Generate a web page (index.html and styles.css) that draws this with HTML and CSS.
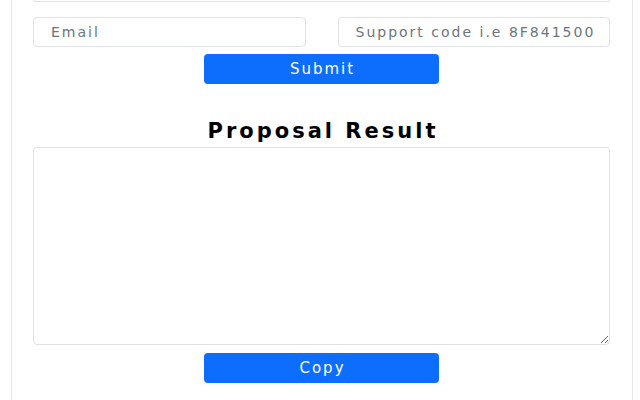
FILE: index.html
```html
<!DOCTYPE html>
<html lang="en">
<head>
<meta charset="utf-8">
<title>Proposal</title>
<link rel="stylesheet" href="styles.css">
</head>
<body>
<div class="panel">
  <div class="prev-field"></div>
  <div class="row">
    <input class="field" type="text" placeholder="Email">
    <input class="field" type="text" placeholder="Support code i.e 8F8415000000">
  </div>
  <div class="actions">
    <button class="btn" type="button">Submit</button>
  </div>
  <h4 class="title">Proposal Result</h4>
  <textarea class="result"></textarea>
  <div class="actions actions-copy">
    <button class="btn" type="button">Copy</button>
  </div>
</div>
</body>
</html>
```
FILE: styles.css
```css
html, body {
  margin: 0;
  padding: 0;
  background: #ffffff;
  font-family: "DejaVu Sans", "Open Sans", sans-serif;
  overflow: hidden;
}
.panel {
  margin-left: 11px;
  width: 622px;
  height: 400px;
  border-left: 1px solid #e6e8eb;
  border-right: 1px solid #e6e8eb;
  padding: 0 22px 0 21px;
  box-sizing: border-box;
}
.prev-field {
  height: 1px;
  border: 1px solid #dee2e6;
  border-top: none;
  border-radius: 0 0 4px 4px;
}
.row {
  display: grid;
  grid-template-columns: 1fr 1fr;
  column-gap: 32px;
  margin-top: 15px;
}
.field {
  height: 30px;
  box-sizing: border-box;
  border: 1px solid #dee2e6;
  border-radius: 4px;
  padding: 0 16px 0 17px;
  font-family: "DejaVu Sans", sans-serif;
  font-size: 14px;
  letter-spacing: 2px;
  color: #212529;
  outline: none;
  min-width: 0;
}
.field::placeholder {
  color: #6c757d;
}
.actions {
  display: flex;
  justify-content: center;
  margin-top: 7px;
}
.actions-copy {
  margin-top: 8px;
}
.btn {
  width: 235px;
  height: 30px;
  background: #0d6efd;
  color: #ffffff;
  border: none;
  border-radius: 4px;
  font-family: "DejaVu Sans", sans-serif;
  font-size: 15px;
  letter-spacing: 2px;
  padding: 0 0 0 2px;
}
.title {
  margin: 33px 0 0;
  padding-left: 3px;
  text-align: center;
  font-family: "DejaVu Sans", sans-serif;
  font-weight: 700;
  font-size: 21px;
  letter-spacing: 3px;
  line-height: 28px;
  color: #000;
}
.result {
  display: block;
  width: 100%;
  height: 198px;
  box-sizing: border-box;
  border: 1px solid #dee2e6;
  border-radius: 4px;
  margin-top: 2px;
  resize: vertical;
  outline: none;
}
```
